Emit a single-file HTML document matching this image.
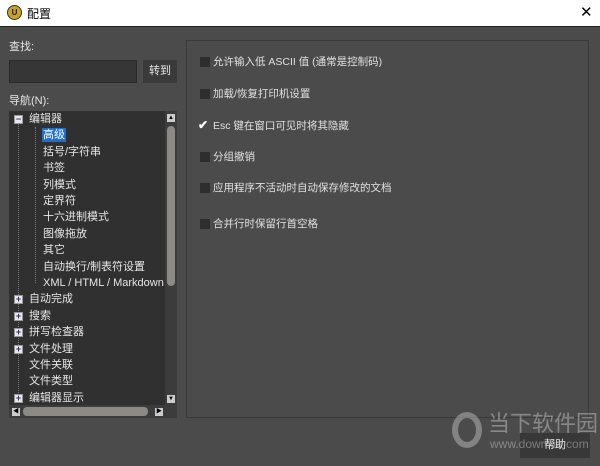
<!DOCTYPE html><html><head><meta charset="utf-8"><style>
*{margin:0;padding:0;box-sizing:border-box}
body{width:600px;height:466px;background:#4b4b4b;font-family:"Liberation Sans","Noto Sans CJK SC",sans-serif;font-size:11px;color:#e6e6e6;position:relative;overflow:hidden}
.a{position:absolute;white-space:nowrap}
#title{left:0;top:0;width:600px;height:26px;background:#fff;color:#000;font-size:12px}
.row{position:absolute;left:0;height:16px;line-height:16px;white-space:nowrap}
.pm{position:absolute;width:9px;height:9px;background:#e8e8e8;border:1px solid #999;color:#336;font-size:9px;line-height:7px;text-align:center;font-weight:bold}
.cb{position:absolute;left:200px;width:10px;height:10px;background:#2e2e2e}
.lbl{position:absolute;left:213px;font-size:10.5px;line-height:14px;color:#e0e0e0;white-space:nowrap}
</style></head><body>
<div class="a" id="title">
 <div class="a" style="left:7px;top:5px;width:15px;height:15px;border-radius:50%;background:#c9a227;border:1px solid #333;color:#222;font-size:8px;font-weight:bold;line-height:13px;text-align:center">U</div>
 <div class="a" style="left:27px;top:5px">配置</div>
 <div class="a" style="left:580px;top:3px;font-size:15px">✕</div>
</div>
<div class="a" style="left:0;top:26px;width:600px;height:1px;background:#222"></div>
<div class="a" style="left:9px;top:38px">查找:</div>
<div class="a" style="left:9px;top:60px;width:128px;height:23px;background:#363636;border:1px solid #2a2a2a"></div>
<div class="a" style="left:143px;top:60px;width:34px;height:23px;background:#3a3a3a;text-align:center;line-height:23px">转到</div>
<div class="a" style="left:9px;top:92px">导航(N):</div>
<div class="a" style="left:9px;top:111px;width:156px;height:294px;background:#303030;overflow:hidden">
 <div class="a" style="left:9px;top:8px;width:1px;height:284px;border-left:1px dotted #777"></div>
 <div class="a" style="left:26px;top:16px;width:1px;height:156px;border-left:1px dotted #777"></div>
 <div class="row" style="top:0"><span class="pm" style="left:5px;top:4px">−</span><span class="a" style="left:20px">编辑器</span></div>
 <div class="row" style="top:16.4px"><span class="a" style="left:33px;top:1px;background:#1f6fd0;color:#fff;line-height:14px;padding:0 1px">高级</span></div>
 <div class="row" style="top:32.8px"><span class="a" style="left:34px">括号/字符串</span></div>
 <div class="row" style="top:49.2px"><span class="a" style="left:34px">书签</span></div>
 <div class="row" style="top:65.6px"><span class="a" style="left:34px">列模式</span></div>
 <div class="row" style="top:82px"><span class="a" style="left:34px">定界符</span></div>
 <div class="row" style="top:98.4px"><span class="a" style="left:34px">十六进制模式</span></div>
 <div class="row" style="top:114.8px"><span class="a" style="left:34px">图像拖放</span></div>
 <div class="row" style="top:131.2px"><span class="a" style="left:34px">其它</span></div>
 <div class="row" style="top:147.6px"><span class="a" style="left:34px">自动换行/制表符设置</span></div>
 <div class="row" style="top:164px"><span class="a" style="left:34px">XML / HTML / Markdown</span></div>
 <div class="row" style="top:180.4px"><span class="pm" style="left:5px;top:4px">+</span><span class="a" style="left:20px">自动完成</span></div>
 <div class="row" style="top:196.8px"><span class="pm" style="left:5px;top:4px">+</span><span class="a" style="left:20px">搜索</span></div>
 <div class="row" style="top:213.2px"><span class="pm" style="left:5px;top:4px">+</span><span class="a" style="left:20px">拼写检查器</span></div>
 <div class="row" style="top:229.6px"><span class="pm" style="left:5px;top:4px">+</span><span class="a" style="left:20px">文件处理</span></div>
 <div class="row" style="top:246px"><span class="a" style="left:20px">文件关联</span></div>
 <div class="row" style="top:262.4px"><span class="a" style="left:20px">文件类型</span></div>
 <div class="row" style="top:278.8px"><span class="pm" style="left:5px;top:4px">+</span><span class="a" style="left:20px">编辑器显示</span></div>
</div>
<div class="a" style="left:165px;top:111px;width:12px;height:294px;background:#3c3c3c"></div>
<div class="a" style="left:167px;top:114px;width:8px;height:8px;background:#ccc;color:#000;font-size:6px;text-align:center;line-height:8px">▲</div>
<div class="a" style="left:167px;top:126px;width:8px;height:160px;background:#8b8a85;border-radius:4px"></div>
<div class="a" style="left:167px;top:395px;width:8px;height:8px;background:#ccc;color:#000;font-size:6px;text-align:center;line-height:8px">▼</div>
<div class="a" style="left:9px;top:405px;width:168px;height:13px;background:#3c3c3c"></div>
<div class="a" style="left:12px;top:408px;width:8px;height:8px;background:#ccc;color:#000;font-size:6px;text-align:center;line-height:8px">◀</div>
<div class="a" style="left:23px;top:407px;width:125px;height:9px;background:#8b8a85;border-radius:4px"></div>
<div class="a" style="left:155px;top:408px;width:8px;height:8px;background:#ccc;color:#000;font-size:6px;text-align:center;line-height:8px">▶</div>
<div class="a" style="left:186px;top:40px;width:403px;height:378px;border:1px solid #3a3a3a;background:#4b4b4b"></div>
<div class="cb" style="top:57px"></div><div class="lbl" style="top:55px">允许输入低 ASCII 值 (通常是控制码)</div>
<div class="cb" style="top:89px"></div><div class="lbl" style="top:87px">加载/恢复打印机设置</div>
<div class="a" style="left:198px;top:118px;font-size:12px;color:#fff;font-weight:bold">✔</div><div class="lbl" style="top:119px">Esc 键在窗口可见时将其隐藏</div>
<div class="cb" style="top:152px"></div><div class="lbl" style="top:150px">分组撤销</div>
<div class="cb" style="top:183px"></div><div class="lbl" style="top:181px">应用程序不活动时自动保存修改的文档</div>
<div class="cb" style="top:219px"></div><div class="lbl" style="top:217px">合并行时保留行首空格</div>
<div class="a" style="left:520px;top:433px;width:70px;height:25px;background:#383838;text-align:center;line-height:25px">帮助</div>
<div class="a" style="left:452px;top:412px;width:30px;height:36px;border:6px solid rgba(200,200,200,.45);border-radius:50%"></div>
<div class="a" style="left:488px;top:412px;font-size:22px;line-height:24px;color:rgba(210,210,210,.45)">当下软件园</div>
<div class="a" style="left:490px;top:437px;font-size:12px;color:rgba(210,210,210,.45)">www.downxia.com</div>
</body></html>
